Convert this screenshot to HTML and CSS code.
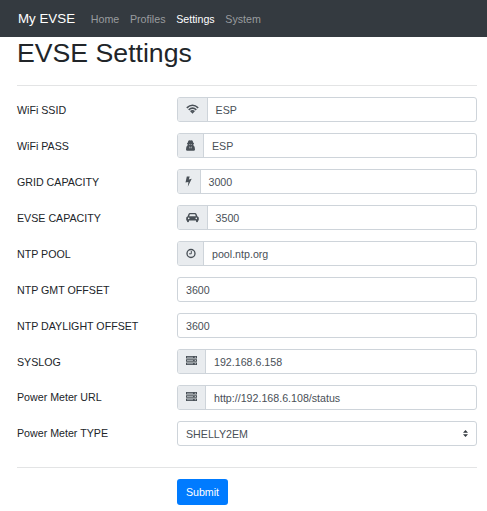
FILE: index.html
```html
<!DOCTYPE html>
<html lang="en">
<head>
<meta charset="utf-8">
<title>My EVSE</title>
<link rel="stylesheet" href="styles.css">
</head>
<body>
<nav class="navbar">
  <a class="brand">My EVSE</a>
  <a class="nav-link">Home</a>
  <a class="nav-link">Profiles</a>
  <a class="nav-link active">Settings</a>
  <a class="nav-link">System</a>
</nav>
<main class="container">
  <h1>EVSE Settings</h1>
  <hr>
  <form class="form">
    <div class="row"><label>WiFi SSID</label><div class="group"><span class="addon w30"><svg width="13" height="11" viewBox="0 0 13 11" fill="none" stroke="currentColor" stroke-width="1.6"><path d="M.8 3.8Q6.5-1.3 12.2 3.8M2.7 5.8Q6.5 2.5 10.3 5.8M4.5 7.7Q6.5 6.1 8.5 7.7"/><path d="M5 8.3Q6.5 7.4 8 8.3L6.5 9.8z" fill="currentColor" stroke="none"/></svg></span><span class="value">ESP</span></div></div>
    <div class="row"><label>WiFi PASS</label><div class="group"><span class="addon w27"><svg width="9" height="11" viewBox="0 0 9 11" fill="currentColor"><path fill-rule="evenodd" d="M1.7 2.8 2.4.7Q3-.1 4.5.4 6-.1 6.6.7L7.3 2.8 8.2 3.4 7.4 4.2V5.2Q9 6 9 9.4 9 10.8 7.6 10.8H1.4Q0 10.8 0 9.4 0 6 1.6 5.2V4.2L.8 3.4zM2.8 4.2 3.1 4.7 4.1 4.6 4.5 4.2 4.9 4.6 5.9 4.7 6.2 4.2zM3.2 6.3 4 9 4.2 7.2zM5.8 6.3 4.8 7.2 5 9z"/></svg></span><span class="value">ESP</span></div></div>
    <div class="row"><label>GRID CAPACITY</label><div class="group"><span class="addon w23"><svg width="7" height="11" viewBox="0 0 7 11" fill="currentColor"><path d="M1.8.6H4.7L3.8 3.4 6.7 2.8 2.8 10.8 3.4 6 .5 6.6z"/></svg></span><span class="value">3000</span></div></div>
    <div class="row"><label>EVSE CAPACITY</label><div class="group"><span class="addon w30"><svg width="13" height="11" viewBox="0 0 13 11" fill="currentColor"><path fill-rule="evenodd" d="M1.5 4.4 2.5 1.9Q2.9.9 4 .9H9Q10.1.9 10.5 1.9L11.5 4.4Q12.8 4.7 12.8 6V8.5H12V9.3Q12 10.2 11 10.2T10 9.3V8.5H3V9.3Q3 10.2 2 10.2T1 9.3V8.5H.2V6Q.2 4.7 1.5 4.4zM3.2 4.3H9.8L9.1 2.3H3.9zM2.7 5.6A.8.8 0 1 0 2.7 7.2.8.8 0 1 0 2.7 5.6zM10.3 5.6A.8.8 0 1 0 10.3 7.2.8.8 0 1 0 10.3 5.6z"/></svg></span><span class="value">3500</span></div></div>
    <div class="row"><label>NTP POOL</label><div class="group"><span class="addon w27"><svg width="10" height="11" viewBox="0 0 10 11" fill="none" stroke="currentColor"><circle cx="5" cy="5.5" r="4" stroke-width="1.35"/><path d="M5.3 3V5.8H3.1" stroke-width="1"/></svg></span><span class="value">pool.ntp.org</span></div></div>
    <div class="row"><label>NTP GMT OFFSET</label><div class="group"><span class="value">3600</span></div></div>
    <div class="row"><label>NTP DAYLIGHT OFFSET</label><div class="group"><span class="value">3600</span></div></div>
    <div class="row"><label>SYSLOG</label><div class="group"><span class="addon raised w29"><svg width="11" height="11" viewBox="0 0 11 11"><path d="M0 1H11V3.6H0zM0 4.2H11V6.8H0zM0 7.4H11V10H0z" fill="currentColor"/><path d="M1 2.3H7M1 5.5H7M1 8.7H7" stroke="#adb3b8" stroke-width=".9"/><path d="M8.8 2.3H9.8M8.8 5.5H9.8M8.8 8.7H9.8" stroke="#e9ecef" stroke-width=".9"/></svg></span><span class="value">192.168.6.158</span></div></div>
    <div class="row late"><label>Power Meter URL</label><div class="group"><span class="addon raised w29"><svg width="11" height="11" viewBox="0 0 11 11"><path d="M0 1H11V3.6H0zM0 4.2H11V6.8H0zM0 7.4H11V10H0z" fill="currentColor"/><path d="M1 2.3H7M1 5.5H7M1 8.7H7" stroke="#adb3b8" stroke-width=".9"/><path d="M8.8 2.3H9.8M8.8 5.5H9.8M8.8 8.7H9.8" stroke="#e9ecef" stroke-width=".9"/></svg></span><span class="value">http://192.168.6.108/status</span></div></div>
    <div class="row late"><label>Power Meter TYPE</label><div class="group"><span class="value">SHELLY2EM</span><svg class="caret" width="5" height="7" viewBox="0 0 4 5" preserveAspectRatio="none" fill="#343a40"><path d="M2 0 0 2h4zm0 5L0 3h4z"/></svg></div></div>
  </form>
  <hr class="end">
  <button class="submit" type="button">Submit</button>
</main>
</body>
</html>
```
FILE: styles.css
```css
* { box-sizing: border-box; }
body {
  margin: 0;
  background: #fff;
  color: #212529;
  font: 10.667px/16px "Liberation Sans", Arial, sans-serif;
}
.navbar {
  display: flex;
  align-items: center;
  height: 37px;
  padding: 1px 17px 0 18px;
  background: #343a40;
}
.brand {
  margin: 0 10.5px 0 0;
  color: #fff;
  font-size: 13.333px;
}
.nav-link {
  padding: 0 5.333px;
  color: #999c9f;
}
.active { color: #fff; }
.container { padding: 0 10px 0 17px; }
h1 {
  margin: 0;
  font-size: 26.667px;
  line-height: 32px;
  font-weight: 400;
}
hr {
  height: 1px;
  margin: 16px 0 11px;
  border: 0;
  background: #e3e4e5;
}
.form {
  display: flex;
  flex-direction: column;
  gap: 10.5px;
}
.row {
  display: flex;
  align-items: center;
  height: 25.5px;
}
label { width: 160px; padding-top: 1px; }
.late label { padding: 0 0 1px; }
.group {
  display: flex;
  align-items: stretch;
  flex: 1;
  height: 25px;
  border: 1px solid #ced4da;
  border-radius: 3px;
  overflow: hidden;
  color: #495057;
}
.addon {
  display: flex;
  justify-content: center;
  align-items: flex-start;
  flex: none;
  padding-top: 6px;
  border-right: 1px solid #ced4da;
  background: #e9ecef;
}
.raised { padding-top: 5px; }
.w23 { width: 22.5px; }
.w27 { width: 26px; }
.w29 { width: 28px; }
.w30 { width: 29.6px; }
.value {
  flex: 1;
  padding: 4px 8px 0;
  line-height: 17px;
}
.caret { align-self: center; margin-right: 8px; }
.end { margin: 20px 0 11px; }
.submit {
  display: block;
  width: 51px;
  height: 26px;
  margin-left: 160px;
  padding: 0;
  border: 0;
  border-radius: 3px;
  background: #007bff;
  color: #fff;
  font: inherit;
}
```
